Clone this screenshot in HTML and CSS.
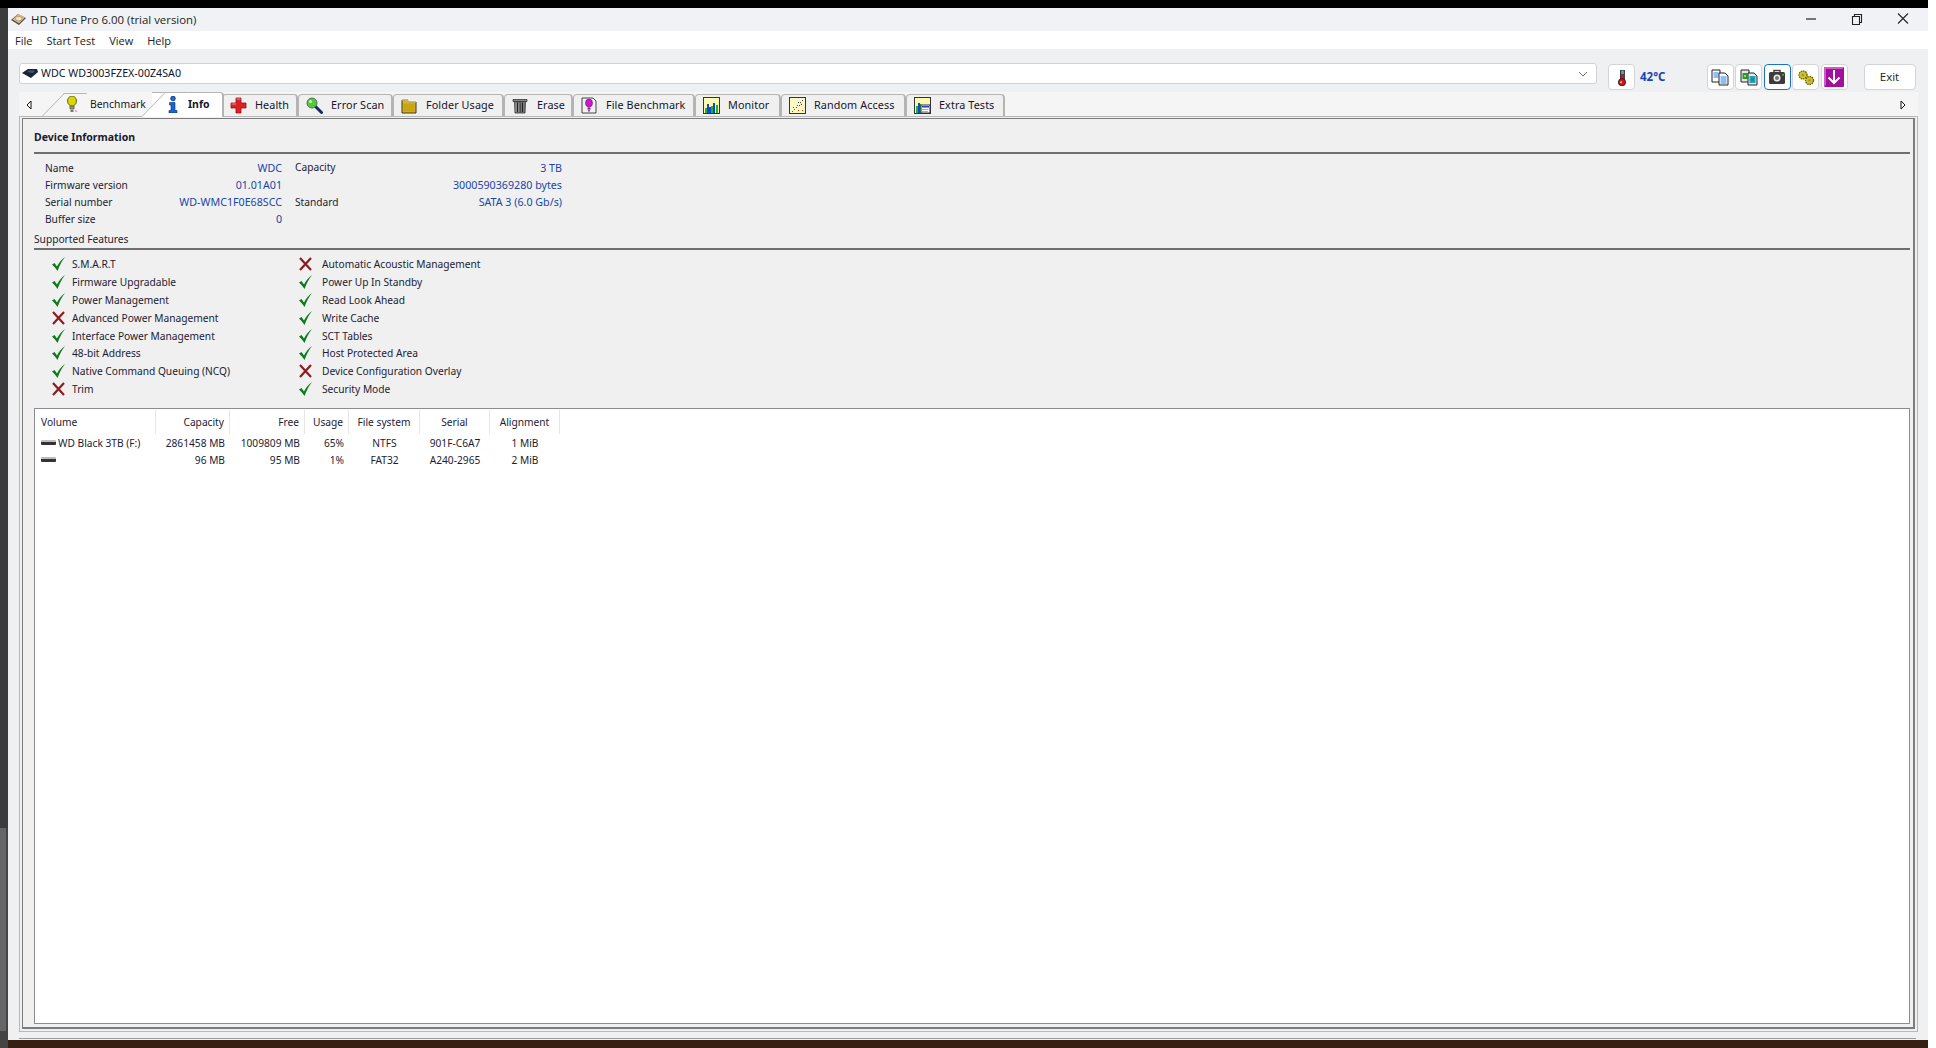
FILE: index.html
```html
<!DOCTYPE html>
<html lang="en">
<head>
<meta charset="utf-8">
<title>HD Tune Pro 6.00 (trial version)</title>
<link rel="stylesheet" href="styles.css">
</head>
<body>
<div class="desktop">
  <div class="side"></div>
  <div class="window">
    <div class="blackbar"></div>
    <div class="titlebar">
      <svg class="appicon" viewBox="0 0 15 13"><path d="M0 7 7 1l8 4-7 7z" fill="#4a4640"/><path d="M1.500 6.500 7.500 .8l6.500 3.800-6 6z" fill="#d9b98c"/><ellipse cx="7.800" cy="5.600" rx="3.300" ry="2.300" fill="#f1e3c6" stroke="#9a7b4d" stroke-width=".6"/></svg>
      <span class="apptitle">HD Tune Pro 6.00 (trial version)</span>
      <div class="winctl">
        <svg viewBox="0 2 46 24"><path d="M18 13h10" stroke="#222" stroke-width="1.200"/></svg>
        <svg viewBox="0 2 46 24"><path d="M18.500 10.500h7v8h-7zM20.500 10V8.500h7v8H26" fill="none" stroke="#222" stroke-width="1.100"/></svg>
        <svg viewBox="0 2 46 24"><path d="m18 7.500 10 10m0-10-10 10" stroke="#222" stroke-width="1.100"/></svg>
      </div>
    </div>
    <nav class="menubar"><span>File</span><span>Start Test</span><span>View</span><span>Help</span></nav>
    <div class="toolbar">
      <div class="combo">
        <svg class="driveicon" viewBox="0 0 16 9"><path d="M0 4 6 0h9l1 3-7 6z" fill="#1d2530"/><path d="M5 3 7 1.500h6L11 4z" fill="#33598c"/></svg>
        <span class="comboval">WDC WD3003FZEX-00Z4SA0</span>
        <svg class="chev" viewBox="0 0 10 6"><path d="m1 1 4 4 4-4" fill="none" stroke="#777"/></svg>
      </div>
      <button class="tool therm"><svg viewBox="0 0 16 18"><rect x="6" y="1" width="5" height="12" fill="#222"/><rect x="7" y="1.500" width="3" height="4" fill="#2bb7c2"/><rect x="7" y="5.500" width="3" height="8" fill="#d3141c"/><circle cx="8" cy="14" r="3.800" fill="#d3141c" stroke="#222"/><circle cx="7" cy="14" r="1" fill="#f6c9c9"/></svg></button>
      <span class="temp">42°C</span>
      <div class="tools">
        <button class="tool"><svg viewBox="0 0 18 17"><path d="M1 1h8v12H1z" fill="#fff" stroke="#222"/><path d="M2.500 4h5M2.500 6h5M2.500 8h5" stroke="#1e7fe6"/><path d="M8 4h6l3 3v9H8z" fill="#fff" stroke="#222"/><path d="M9.500 8h6M9.500 10h6M9.500 12h6M9.500 14h6" stroke="#1e7fe6"/></svg></button>
        <button class="tool"><svg viewBox="0 0 18 17"><path d="M1 1h8v12H1z" fill="#e8e8e8" stroke="#222"/><rect x="2.500" y="4" width="5" height="6" fill="#1aa13c"/><rect x="4" y="6" width="2" height="2" fill="#e4c51c"/><path d="M8 4h6l3 3v9H8z" fill="#e8e8e8" stroke="#222"/><rect x="9.500" y="7" width="6" height="7" fill="#1e9fd6"/><rect x="11" y="9" width="3" height="3" fill="#1aa13c"/></svg></button>
        <button class="tool focus"><svg viewBox="0 0 18 17"><path d="M6 3V1.500h6V3" fill="none" stroke="#444" stroke-width="1.500"/><rect x="1" y="3" width="16" height="12" rx="1.500" fill="#3c3c3c"/><circle cx="9" cy="9" r="3.500" fill="#ededed"/><circle cx="9" cy="9" r="2" fill="#777"/><rect x="14" y="5" width="2" height="1.500" fill="#2fbf45"/></svg></button>
        <button class="tool"><svg viewBox="0 0 18 17"><circle cx="6" cy="6" r="4" fill="#d8c514" stroke="#6e6406" stroke-dasharray="1.500 .8" stroke-width="1.400"/><circle cx="6" cy="6" r="1.300" fill="#8b8d8f"/><circle cx="12.500" cy="11.500" r="4" fill="#d8c514" stroke="#6e6406" stroke-dasharray="1.500 .8" stroke-width="1.400"/><circle cx="12.500" cy="11.500" r="1.300" fill="#8b8d8f"/></svg></button>
        <button class="tool"><svg class="big" viewBox="0 0 20 20"><rect width="20" height="20" rx="1" fill="#a0109c"/><path d="M0 20V0h20l-2 2H2v16z" fill="#cf5acb"/><path d="M10 3v13M4.500 10.500 10 16l5.500-5.500" fill="none" stroke="#fff" stroke-width="2"/></svg></button>
      </div>
      <button class="exit">Exit</button>
    </div>
    <div class="tabs">
      <svg class="arrow" viewBox="0 0 6 10"><path d="M5 1 1 5l4 4z" fill="#fff" stroke="#111"/></svg>
      <div class="tab slant t-bench">
        <svg class="ticon narrow" viewBox="0 0 10 17"><ellipse cx="5" cy="5" rx="4.500" ry="5" fill="#d9d60c" stroke="#6b6a06"/><path d="M3 10h4v3H3z" fill="#a9a70a" stroke="#666"/><path d="M3.500 14h3v2h-3z" fill="#777"/><circle cx="9" cy="15" r=".8" fill="#e03bd0"/></svg>
        <span>Benchmark</span>
      </div>
      <div class="tab slant active t-info">
        <svg class="ticon narrow" viewBox="0 0 10 17"><circle cx="5" cy="2.500" r="2.400" fill="#1467d8" stroke="#0b2a66" stroke-width=".6"/><path d="M1.500 6.500H7v8h2V17H1v-2.500h2v-5.500H1.500z" fill="#1467d8" stroke="#0b2a66" stroke-width=".6"/></svg>
        <span>Info</span>
      </div>
      <div class="tab t-health">
        <svg class="ticon" viewBox="0 0 17 17"><path d="M6 1h5v5h5v5h-5v5H6v-5H1V6h5z" fill="#e01f24" stroke="#8e1418" stroke-width=".8"/><path d="M6.500 1.500h4v1h-4zM1.500 6.500H6v1H1.500z" fill="#f28b8d"/></svg>
        <span>Health</span>
      </div>
      <div class="tab t-scan">
        <svg class="ticon" viewBox="0 0 17 17"><path d="m9 9 6.500 6.500" stroke="#1a2a66" stroke-width="3" stroke-linecap="round"/><circle cx="6" cy="6" r="5" fill="#4ecb35" stroke="#666"/><circle cx="4.500" cy="4.500" r="1.500" fill="#c8f5b5"/></svg>
        <span>Error Scan</span>
      </div>
      <div class="tab t-folder">
        <svg class="ticon" viewBox="0 0 17 17"><path d="M1 3h6l1.500 2H15v11H1z" fill="#d9b51e" stroke="#3c3420"/><path d="M1 3h6l1.500 2H15" fill="none" stroke="#f4e49a"/><rect x="2.500" y="6.500" width="11" height="8" fill="#c9a515"/></svg>
        <span>Folder Usage</span>
      </div>
      <div class="tab t-erase">
        <svg class="ticon" viewBox="0 0 17 17"><path d="M1 2.500h14v2H1z" fill="#888" stroke="#333" stroke-width=".8"/><path d="M2.500 4.500h11L13 16H3z" fill="#777" stroke="#333" stroke-width=".8"/><path d="M5.500 5.500V15M8 5.500V15M10.500 5.500V15" stroke="#222"/><path d="M4 6v9M7 6v9" stroke="#bbb" stroke-width=".6"/></svg>
        <span>Erase</span>
      </div>
      <div class="tab t-file">
        <svg class="ticon" viewBox="0 0 17 17"><path d="M1 1h11l3 3v12H1z" fill="#f1f1f1" stroke="#444"/><ellipse cx="8" cy="6" rx="3.500" ry="4" fill="#d214d0" stroke="#6b0b6b" stroke-width=".6"/><path d="M6.500 10.500h3v2h-3z" fill="#8e108c"/><path d="M7 13h2v1.500H7z" fill="#666"/></svg>
        <span>File Benchmark</span>
      </div>
      <div class="tab t-mon">
        <svg class="ticon" viewBox="0 0 17 17"><rect x=".5" y=".5" width="16" height="16" fill="#fbf9b4" stroke="#333"/><path d="M2 11h2v5H2zM8 9h2v7H8zM13 8h2v8h-2z" fill="#1db42e"/><path d="M4 7h2v9H4zM6 10h2v6H6zM10 6h2v10h-2z" fill="#1b3fd9"/></svg>
        <span>Monitor</span>
      </div>
      <div class="tab t-rand">
        <svg class="ticon" viewBox="0 0 17 17"><rect x=".5" y=".5" width="16" height="16" fill="#fbf9c4" stroke="#333"/><path d="M3 14h1v1H3zM5 12h1v1H5zM9 13h1v1H9zM13 13h1v1h-1zM8 8h1v1H8zM11 5h1v1h-1z" fill="#d8241c"/><path d="M4 10h1v1H4zM7 10h1v1H7zM10 8h1v1h-1zM13 3h1v1h-1zM12 7h1v1h-1zM9 5h1v1H9z" fill="#1b3fd9"/></svg>
        <span>Random Access</span>
      </div>
      <div class="tab t-extra">
        <svg class="ticon" viewBox="0 0 17 17"><rect x=".5" y=".5" width="16" height="16" fill="#fbf9b4" stroke="#333"/><path d="M2 9h2v7H2zM6 7h1v9H6z" fill="#1db42e"/><path d="M4 6h2v10H4z" fill="#1b3fd9"/><rect x="7" y="8" width="9" height="8" fill="#fff" stroke="#333"/><path d="M8 9h7v1.500H8z" fill="#1b3fd9"/><path d="M8.500 12h1v1h-1zM10.500 12h1v1h-1zM12.500 12h1v1h-1zM8.500 14h1v1h-1zM10.500 14h1v1h-1zM12.500 14h1v1h-1z" fill="#d8241c"/></svg>
        <span>Extra Tests</span>
      </div>
      <svg class="arrow end" viewBox="0 0 6 10"><path d="m1 1 4 4-4 4z" fill="#fff" stroke="#111"/></svg>
    </div>
    <div class="panel">
      <div class="inner">
        <h2 class="heading">Device Information</h2>
        <div class="rule"></div>
        <div class="devinfo">
          <span class="lbl">Name</span><span class="val">WDC</span><span class="lbl second up">Capacity</span><span class="val">3 TB</span>
          <span class="lbl">Firmware version</span><span class="val">01.01A01</span><span class="lbl second"></span><span class="val">3000590369280 bytes</span>
          <span class="lbl">Serial number</span><span class="val">WD-WMC1F0E68SCC</span><span class="lbl second">Standard</span><span class="val">SATA 3 (6.0 Gb/s)</span>
          <span class="lbl">Buffer size</span><span class="val">0</span><span class="lbl second"></span><span class="val"></span>
        </div>
        <div class="subhead">Supported Features</div>
        <div class="rule"></div>
        <div class="features">
          <div class="feat"><svg class="ck"><use href="#yes"/></svg>S.M.A.R.T</div>
          <div class="feat"><svg class="ck"><use href="#no"/></svg>Automatic Acoustic Management</div>
          <div class="feat"><svg class="ck"><use href="#yes"/></svg>Firmware Upgradable</div>
          <div class="feat"><svg class="ck"><use href="#yes"/></svg>Power Up In Standby</div>
          <div class="feat"><svg class="ck"><use href="#yes"/></svg>Power Management</div>
          <div class="feat"><svg class="ck"><use href="#yes"/></svg>Read Look Ahead</div>
          <div class="feat"><svg class="ck"><use href="#no"/></svg>Advanced Power Management</div>
          <div class="feat"><svg class="ck"><use href="#yes"/></svg>Write Cache</div>
          <div class="feat"><svg class="ck"><use href="#yes"/></svg>Interface Power Management</div>
          <div class="feat"><svg class="ck"><use href="#yes"/></svg>SCT Tables</div>
          <div class="feat"><svg class="ck"><use href="#yes"/></svg>48-bit Address</div>
          <div class="feat"><svg class="ck"><use href="#yes"/></svg>Host Protected Area</div>
          <div class="feat"><svg class="ck"><use href="#yes"/></svg>Native Command Queuing (NCQ)</div>
          <div class="feat"><svg class="ck"><use href="#no"/></svg>Device Configuration Overlay</div>
          <div class="feat"><svg class="ck"><use href="#no"/></svg>Trim</div>
          <div class="feat"><svg class="ck"><use href="#yes"/></svg>Security Mode</div>
        </div>
        <div class="listbox">
          <div class="lrow head">
            <span class="l">Volume</span><span class="r">Capacity</span><span class="r">Free</span><span class="r">Usage</span><span class="c">File system</span><span class="c">Serial</span><span class="c">Alignment</span>
          </div>
          <div class="lrow">
            <span class="l vol"><i class="disk"></i>WD Black 3TB (F:)</span><span class="r">2861458 MB</span><span class="r">1009809 MB</span><span class="r">65%</span><span class="c">NTFS</span><span class="c">901F-C6A7</span><span class="c">1 MiB</span>
          </div>
          <div class="lrow">
            <span class="l vol"><i class="disk"></i></span><span class="r">96 MB</span><span class="r">95 MB</span><span class="r">1%</span><span class="c">FAT32</span><span class="c">A240-2965</span><span class="c">2 MiB</span>
          </div>
        </div>
      </div>
    </div>
    <div class="bottomline"></div>
    <div class="wallpaper"></div>
  </div>
</div>
<svg class="defs" width="0" height="0">
  <symbol id="yes" viewBox="0 0 13 14"><path d="M0 7.500 2.500 6l2.500 3.500C7 5.500 9.500 2.500 13 0 10 3.500 7.500 8.500 5.500 14 4 11.500 2 9.500 0 7.500z" fill="#0b7a1b"/></symbol>
  <symbol id="no" viewBox="0 0 13 14"><path d="m1 1 11 12M12 1 1 13" stroke="#8c1c20" stroke-width="2.200" fill="none"/></symbol>
</svg>
</body>
</html>
```
FILE: styles.css
```css
* { box-sizing: border-box; }
html, body { margin: 0; height: 100%; background: #fff; overflow: hidden; }
body { font: 10.200px/1 "Noto Sans", "Liberation Sans", sans-serif; color: #1a1a1a; }
.defs { position: absolute; }
.desktop { display: flex; width: 1936px; height: 1048px; }
.side { width: 8px; background: linear-gradient(#666, #666) 0 828px / 6px 203px no-repeat, linear-gradient(#000 0 8px, #3c3c3c 8px 828px, #444 828px); }
.window { width: 1920px; display: flex; flex-direction: column; background: #eef0f2; }
.blackbar { height: 8px; background: #000; }
.titlebar { height: 23px; background: #f0f2f5; display: flex; align-items: center; padding-left: 3px; }
.appicon { width: 15px; height: 13px; }
.apptitle { margin-left: 5px; font: 11.400px "Open Sans", sans-serif; color: #222; }
.winctl { margin-left: auto; display: flex; align-self: flex-start; margin-right: 2px; }
.winctl svg { width: 46px; height: 24px; display: block; }
.menubar { height: 18px; background: #fff; display: flex; align-items: center; gap: 14px; padding-left: 7px; font: 11px "Open Sans", sans-serif; color: #222; }
.toolbar { height: 43px; display: flex; align-items: flex-start; padding: 14px 0 0 11px; }
.combo { width: 1578px; height: 21px; background: #fff; border: 1px solid #d0d2d4; border-radius: 3px; display: flex; align-items: center; padding: 0 8px 0 2px; }
.driveicon { width: 16px; height: 9px; }
.comboval { margin-left: 3px; color: #10142c; font-size: 10.700px; }
.chev { width: 10px; height: 6px; margin-left: auto; }
.tool { width: 27px; height: 26px; padding: 0; background: #fff; border: 1px solid #d4d4d4; border-radius: 4px; display: flex; align-items: center; justify-content: center; margin-top: 1px; }
.tool svg { width: 18px; height: 17px; display: block; }
.tool svg.big { width: 20px; height: 20px; }
.tool.focus { border-color: #1a73c8; }
.therm { margin-left: 11px; }
.temp { width: 66.500px; margin: 7px 0 0 5px; font: bold 11.500px "Noto Sans", sans-serif; color: #1747ad; line-height: 14px; }
.tools { display: flex; gap: 1.500px; }
.exit { width: 52px; height: 26px; margin: 1px 0 0 16px; background: #fff; border: 1px solid #d4d4d4; border-radius: 4px; font: 11.500px "Open Sans", sans-serif; color: #222; padding: 0 0 2px; }
.tabs { height: 25px; width: 1899px; margin-left: 11px; background: #f5f5f5; display: flex; align-items: flex-end; position: relative; padding-left: 22px; }
.arrow { width: 6px; height: 10px; position: absolute; left: 7px; top: 8px; }
.arrow.end { left: auto; right: 12px; }
.tab { height: 23px; display: flex; align-items: center; gap: 8px; padding: 0 0 2px 7px; background: #f0f0f0; border: 1px solid #b4b4b4; border-bottom: 0; border-right-width: 2px; border-radius: 4px 4px 0 0; font-size: 10.800px; letter-spacing: .1px; color: #15152c; position: relative; }
.ticon { width: 17px; height: 17px; flex: none; }
.ticon.narrow { width: 10px; }
.slant { border-left: 0; border-top-left-radius: 0; background: none; }
.slant::before { content: ""; position: absolute; z-index: -1; top: -1px; bottom: 0; left: 11px; right: -2px; background: #f5f5f5; border-top: 1px solid #b4b4b4; border-right: 2px solid #b4b4b4; border-radius: 0 4px 0 0; }
.slant::after { content: ""; position: absolute; top: -1px; bottom: 0; left: 0; width: 22px; background: #f5f5f5; border-left: 1px solid #b4b4b4; border-top: 1px solid #b4b4b4; transform: skewX(-44deg); transform-origin: bottom left; z-index: 0; }
.slant .ticon, .slant span { position: relative; z-index: 1; }
.t-bench { width: 116px; margin-right: -16px; padding-left: 26px; border: 0; gap: 13px; font-size: 10.400px; letter-spacing: 0; }
.t-info { width: 81px; padding-left: 27px; height: 24px; border: 0; gap: 10px; font-weight: 700; font-size: 10.500px; letter-spacing: 0; background: none; z-index: 1; }
.active::before, .active::after { background: #fff; }
.t-health { width: 76px; }
.t-scan { width: 95px; }
.t-folder { width: 111px; }
.t-erase { width: 69px; }
.t-file { width: 122px; }
.t-mon { width: 86px; }
.t-rand { width: 125px; }
.t-extra { width: 99px; }
.panel { height: 916px; width: 1899px; margin: -1px 0 0 11px; position: relative; background: #f0f0f0; border: 1px solid #b8b8b8; padding: 1px 2px 2px; }
.inner { height: 100%; border: solid #7c7c7c; border-width: 1px 2px 2px 1px; padding: 0 3px 0 11px; display: flex; flex-direction: column; background: #f0f0f0; }
.heading { margin: 0; font: bold 10.500px/18px "Noto Sans", sans-serif; padding-top: 9px; height: 33px; color: #1a1a2c; }
.rule { height: 2px; background: #6e6e6e; flex: none; }
.devinfo { display: grid; grid-template-columns: 100px 137px 93px 187px; grid-auto-rows: 17px; margin: 6px 0 0 11px; align-items: center; line-height: 17px; }
.val { text-align: right; color: #1946a8; font-size: 10.700px; }
.lbl { color: #1c1c34; }
.second { padding-left: 13px; }
.up { transform: translateY(-1px); }
.subhead { height: 17px; margin-top: 3px; line-height: 17px; color: #1c1c34; }
.features { display: grid; grid-template-columns: 247px 260px; grid-auto-rows: 17.900px; margin: 5px 0 0 18px; color: #1c1c34; flex: none; }
.feat { display: flex; align-items: center; gap: 7px; line-height: 18px; }
.ck { width: 13px; height: 14px; flex: none; }
.feat:nth-child(even) .ck { margin-right: 3px; }
.listbox { flex: 1; margin: 10px 0 3px 0; background: #fff; border: 1px solid #8a8c90; padding-top: 1px; }
.lrow { display: grid; grid-template-columns: 121px 74px 75px 44px 71px 70px 70px; height: 17px; align-items: center; white-space: nowrap; color: #1c1c34; }
.head { height: 24px; }
.head span { height: 24px; line-height: 24px; border-right: 1px solid #e6e6e6; }
.l { padding-left: 6px; }
.r { text-align: right; padding-right: 5px; }
.c { text-align: center; }
.vol { display: flex; align-items: center; gap: 2px; }
.disk { display: block; width: 15px; height: 5px; background: linear-gradient(#bdbdbd 0 2px, #333 2px); border-radius: 1px; }
.bottomline { height: 1px; width: 1897px; margin: 6px 0 0 11px; background: #9c9c9c; }
.wallpaper { flex: 1; margin-top: 1px; background: #372013; }
```
